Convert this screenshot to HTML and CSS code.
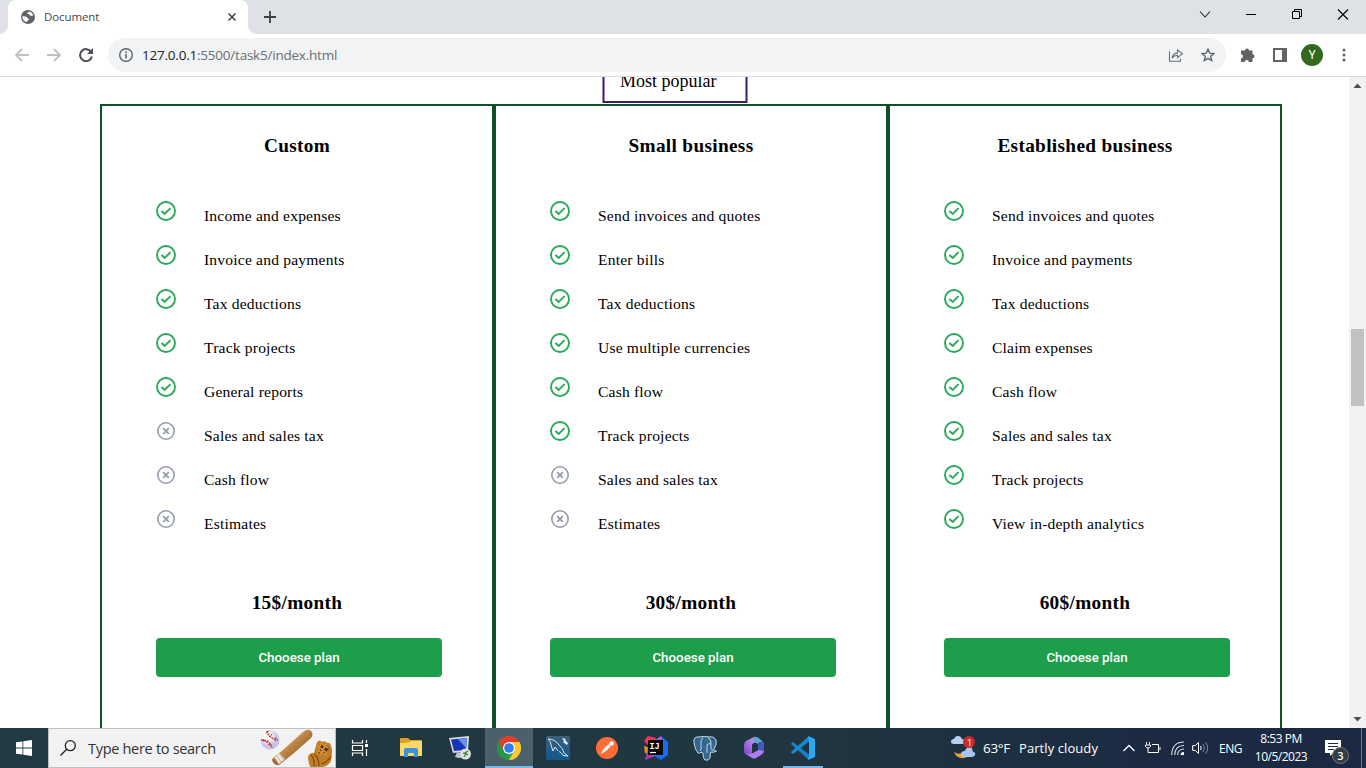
FILE: index.html
```html
<!DOCTYPE html>
<html lang="en">
<head>
<meta charset="utf-8">
<title>Document</title>
<link rel="stylesheet" href="styles.css">
</head>
<body>
<svg class="defs" width="0" height="0" aria-hidden="true">
  <symbol id="yes" viewBox="0 0 20 20"><circle cx="10" cy="10" r="9" fill="none" stroke="#28a85b" stroke-width="1.9"/><path d="M5.4 10 8.7 13 14.500 7.200" fill="none" stroke="#28a85b" stroke-width="1.900"/></symbol>
  <symbol id="no" viewBox="0 0 20 20"><circle cx="10" cy="10" r="8.200" fill="none" stroke="#949bad" stroke-width="1.600"/><path d="M7.2 7.2 12.8 12.8M12.8 7.2 7.2 12.8" fill="none" stroke="#949bad" stroke-width="1.800"/></symbol>
</svg>
<header class="tabstrip">
  <div class="tab">
    <svg class="globe" width="14" height="14" viewBox="0 0 14 14"><circle cx="7" cy="7" r="7" fill="#5f6368"/><path d="M1.500 6.300c1.500.2 3.200-.1 4.300.8.8.7.5 1.500 1.600 1.600.8.1.7 1.300-.1 1.400-.9.200-.5 1.200-1.200 1.900C3.500 12 1.100 9.600 1.500 6.300zM8 1.500c-.2 1-1.800.8-2 1.800-.1.800.9.700 1.700.8 1 .2.8 1.700 1.900 1.700 1 0 1.600-.8 2.800.1C12.200 3.700 10.300 1.700 8 1.500z" fill="#fff"/></svg>
    <span class="tab-title">Document</span>
    <svg width="8" height="8" viewBox="0 0 8 8"><path d="M.5.5l7 7M7.500.5l-7 7" stroke="#3c4043" stroke-width="1.500"/></svg>
  </div>
  <svg class="plus" width="12" height="12" viewBox="0 0 12 12"><path d="M6 0v12M0 6h12" stroke="#3c4043" stroke-width="1.800"/></svg>
  <div class="window-buttons">
    <svg width="46" height="28" viewBox="0 0 46 28"><path d="M18 11.500l5 5.500 5-5.500" fill="none" stroke="#222" stroke-width="1.100"/></svg>
    <svg width="46" height="28" viewBox="0 0 46 28"><path d="M18 14.500h10" stroke="#000"/></svg>
    <svg width="46" height="28" viewBox="0 0 46 28"><path d="M18.500 11.500h7v7h-7zM20.500 11v-1.500h7v7H26" fill="none" stroke="#000"/></svg>
    <svg width="46" height="28" viewBox="0 0 46 28"><path d="M18 9.500l10 10M28 9.500l-10 10" stroke="#000" stroke-width="1.100"/></svg>
  </div>
</header>
<nav class="toolbar">
  <svg width="14" height="14" viewBox="0 0 14 14"><path d="M14 7H1.500M7 1 1 7l6 6" fill="none" stroke="#bdc0c4" stroke-width="1.800"/></svg>
  <svg width="14" height="14" viewBox="0 0 14 14"><path d="M0 7h12.500M7 1l6 6-6 6" fill="none" stroke="#bdc0c4" stroke-width="1.800"/></svg>
  <svg width="14" height="14" viewBox="0 0 14 14"><path d="M12.200 4A6 6 0 1 0 12.900 8.500" fill="none" stroke="#4b4e52" stroke-width="2"/><path d="M14 0v6H8z" fill="#4b4e52"/></svg>
  <div class="omnibox">
    <svg width="14" height="14" viewBox="0 0 14 14"><circle cx="7" cy="7" r="6.300" fill="none" stroke="#5f6368" stroke-width="1.400"/><path d="M7 6v4.500M7 3.300v1.600" stroke="#5f6368" stroke-width="1.600"/></svg>
    <span class="url"><b>127.0.0.1</b>:5500/task5/index.html</span>
    <svg class="share" width="16" height="14" viewBox="0 0 16 14"><path d="M1.500 3.500v9.800h11v-2.500M4 10.200c.5-3.300 2.200-5 5.500-5.300V1.800l5 3.900-5 3.900V7.200c-2.200 0-4 1-5.500 3z" fill="none" stroke="#6b6f74" stroke-width="1.100"/></svg>
    <svg width="14" height="14" viewBox="0 0 14 14"><path d="M7 1.200l1.700 3.900 4.200.4-3.200 2.800 1 4.200L7 10.300l-3.700 2.200 1-4.200L1.100 5.500l4.200-.4z" fill="none" stroke="#5f6368" stroke-width="1.400"/></svg>
  </div>
  <svg class="puzzle" width="15" height="15" viewBox="0 0 15 15"><path d="M1.500 2.500H5a2 2 0 1 1 4 0h3.500v3.800a2 2 0 1 1 0 4v3.700H8.700a2 2 0 1 0-4 0H1V10.200a2 2 0 1 0 0-4V2.500z" fill="#5f6368"/></svg>
  <svg class="panel" width="14" height="14" viewBox="0 0 14 14"><path d="M1 1h12v12H1z" fill="none" stroke="#5f6368" stroke-width="2"/><path d="M9 1h4v12H9z" fill="#5f6368"/></svg>
  <span class="avatar">Y</span>
  <svg class="dots" width="4" height="14" viewBox="0 0 4 14"><g fill="#5f6368"><circle cx="2" cy="2" r="1.500"/><circle cx="2" cy="7" r="1.500"/><circle cx="2" cy="12" r="1.500"/></g></svg>
</nav>
<div class="viewport">
  <main class="page">
    <div class="ribbon"><div class="popular">Most popular</div></div>
    <div class="plans">
      <section class="plan">
        <h3>Custom</h3>
        <ul>
          <li><svg><use href="#yes"/></svg><span>Income and expenses</span></li>
          <li><svg><use href="#yes"/></svg><span>Invoice and payments</span></li>
          <li><svg><use href="#yes"/></svg><span>Tax deductions</span></li>
          <li><svg><use href="#yes"/></svg><span>Track projects</span></li>
          <li><svg><use href="#yes"/></svg><span>General reports</span></li>
          <li><svg><use href="#no"/></svg><span>Sales and sales tax</span></li>
          <li><svg><use href="#no"/></svg><span>Cash flow</span></li>
          <li><svg><use href="#no"/></svg><span>Estimates</span></li>
        </ul>
        <p class="price">15$/month</p>
        <button>Chooese plan</button>
      </section>
      <section class="plan">
        <h3>Small business</h3>
        <ul>
          <li><svg><use href="#yes"/></svg><span>Send invoices and quotes</span></li>
          <li><svg><use href="#yes"/></svg><span>Enter bills</span></li>
          <li><svg><use href="#yes"/></svg><span>Tax deductions</span></li>
          <li><svg><use href="#yes"/></svg><span>Use multiple currencies</span></li>
          <li><svg><use href="#yes"/></svg><span>Cash flow</span></li>
          <li><svg><use href="#yes"/></svg><span>Track projects</span></li>
          <li><svg><use href="#no"/></svg><span>Sales and sales tax</span></li>
          <li><svg><use href="#no"/></svg><span>Estimates</span></li>
        </ul>
        <p class="price">30$/month</p>
        <button>Chooese plan</button>
      </section>
      <section class="plan">
        <h3>Established business</h3>
        <ul>
          <li><svg><use href="#yes"/></svg><span>Send invoices and quotes</span></li>
          <li><svg><use href="#yes"/></svg><span>Invoice and payments</span></li>
          <li><svg><use href="#yes"/></svg><span>Tax deductions</span></li>
          <li><svg><use href="#yes"/></svg><span>Claim expenses</span></li>
          <li><svg><use href="#yes"/></svg><span>Cash flow</span></li>
          <li><svg><use href="#yes"/></svg><span>Sales and sales tax</span></li>
          <li><svg><use href="#yes"/></svg><span>Track projects</span></li>
          <li><svg><use href="#yes"/></svg><span>View in-depth analytics</span></li>
        </ul>
        <p class="price">60$/month</p>
        <button>Chooese plan</button>
      </section>
    </div>
  </main>
  <div class="scrollbar">
    <svg width="17" height="17" viewBox="0 0 17 17"><path d="M4.500 11 8.500 6.500l4 4.500z" fill="#505050"/></svg>
    <div class="thumb"></div>
    <svg width="17" height="17" viewBox="0 0 17 17"><path d="M4.500 6h8l-4 4.500z" fill="#505050"/></svg>
  </div>
</div>
<footer class="taskbar">
  <div class="start"><svg width="16" height="16" viewBox="0 0 16 16"><path d="M0 2.300 6.500 1.400v6.200H0zM7.300 1.300 16 0v7.600H7.300zM0 8.400h6.500v6.200L0 13.700zM7.300 8.400H16V16l-8.700-1.300z" fill="#fff"/></svg></div>
  <div class="search">
    <svg width="16" height="16" viewBox="0 0 16 16"><circle cx="10.300" cy="5.700" r="5" fill="none" stroke="#222" stroke-width="1.300"/><path d="M6.700 9.300.5 15.500" stroke="#222" stroke-width="1.400"/></svg>
    <span class="search-text">Type here to search</span>
    <svg class="baseball" width="73" height="38" viewBox="0 0 73 38">
      <defs><linearGradient id="bat" x1="0" y1="0" x2="1" y2="1"><stop offset=".3" stop-color="#dba35c"/><stop offset=".7" stop-color="#96602d"/></linearGradient><radialGradient id="ball" cx=".35" cy=".3"><stop offset=".4" stop-color="#fafafa"/><stop offset="1" stop-color="#c9c3e8"/></radialGradient></defs>
      <circle cx="10" cy="11" r="9.500" fill="url(#ball)"/>
      <path d="M7 2q1 7 11 9M1 11q9 0 11 8" fill="none" stroke="#c33b3b" stroke-width="1.500" stroke-dasharray="2 .8"/><path d="M9 1.500l-3 3M12 5l-2 3M16 8l-1 4M3 10l1 3M8 11l-2 3M11 15l-3 1" stroke="#c33b3b"/>
      <path d="M12 30Q18 25 24 20L43 3q5-4 8-1 3 3 0 7L34 24 19 36q-5 0-7-6z" fill="url(#bat)"/><path d="M15 28l4-4 6 6-6 5q-4-1-4-7z" fill="#eee7dc"/><path d="M16 26l5 7M19 24l5 7" stroke="#b7aaa0"/><path d="M12 31q3-4 7 5-5 1-7-5z" fill="#a96931"/>
      <path d="M48 28q2-5 6-4l3-11q3-3 5 0 3-2 5 1 3-1 4 3 2 2 0 15-3 6-10 6H51q-2 0-3-10z" fill="#c27e24"/><path d="M57 22l3-7 6 1 3 3-3 5-6 1z" fill="#543015"/><path d="M57 17l10 7M57 21l9 5M62 15l6 4M66 15l-6 11M61 14l-3 9" stroke="#d8943b" stroke-width="1.600"/><path d="M54 25q5 3 5 12M51 26q4 4 3 11M71 27q-3 6-10 8" fill="none" stroke="#814711" stroke-width="1.200"/>
    </svg>
  </div>
  <div class="slot taskview"><svg width="18" height="16" viewBox="0 0 18 16"><path d="M1.500 0v3h10V0M1.500 16v-3h10v3M1.500 5.500h10v5h-10zM15.500 0v3M15.500 9v7" fill="none" stroke="#fff" stroke-width="1.200"/><path d="M14 4h3v3h-3z" fill="#fff"/></svg></div>
  <div class="apps">
    <div class="slot"><svg width="22" height="20" viewBox="0 0 22 20"><path d="M0 1q0-1 1-1h7l2 2h11q1 0 1 1v15H0z" fill="#dfa023"/><path d="M0 5q9 0 11-2h11v15H0z" fill="#ffd766"/><path d="M4 19v-7q0-2 2-2h10q2 0 2 2v7h-4v-4H8v4z" fill="#3994dd"/></svg></div>
    <div class="slot"><svg width="24" height="26" viewBox="0 0 24 26"><path d="M1 3l20-2-1 15-15 2z" fill="#d9dfe5"/><path d="M3 4.500l16-1.500-1 12-12 1z" fill="#1735b7"/><path d="M10 4l9-1-1 10z" fill="#6b91ed"/><path d="M9 17l6 1 1 4q-4 2-9 0z" fill="#b9c2c9"/><circle cx="17.500" cy="19" r="5.500" fill="#dde1de"/><path d="M15 18l3 1-2 3M20 16l-3 2 3 2" fill="none" stroke="#37833b" stroke-width="1.300"/></svg></div>
    <div class="slot active"><svg width="24" height="24" viewBox="0 0 24 24"><circle cx="12" cy="12" r="12" fill="#34a853"/><path d="M1.600 6A12 12 0 0 1 22.400 6H12l-5.200 9z" fill="#e33b2e"/><path d="M22.400 6A12 12 0 0 1 12 24l5.200-9L12 6z" fill="#fcc934"/><path d="M1.600 6 6.800 15 12 18l-1 6A12 12 0 0 1 1.600 6z" fill="#26954a"/><circle cx="12" cy="12" r="6" fill="#fff"/><circle cx="12" cy="12" r="4.800" fill="#2f7de9"/></svg></div>
    <div class="slot"><svg width="24" height="24" viewBox="0 0 24 24"><defs><linearGradient id="sq" x2="0" y2="1"><stop stop-color="#3b607e"/><stop offset="1" stop-color="#11578d"/></linearGradient></defs><rect width="24" height="24" rx="2" fill="url(#sq)"/><path d="M2 3q7 0 11 6 4 3 5 8l4 3-5-.5q-2-4-4-4M2 3q3 2 3 6l2 6 2-4 3 4" fill="none" stroke="#d7e6ee"/><path d="M16 2l2 3-1 1 4 3 1-2-3-3 1-1z" fill="#e9eef1"/></svg></div>
    <div class="slot"><svg width="22" height="22" viewBox="0 0 22 22"><circle cx="11" cy="11" r="11" fill="#ff6c37"/><path d="M5 17q2-6 8-10l2 2q-4 5-10 8z" fill="#fff"/><circle cx="15.500" cy="6.500" r="2.300" fill="#fff"/><path d="M12.500 7.500l2 2" stroke="#ff6c37" stroke-width=".8"/></svg></div>
    <div class="slot"><svg class="idea" width="24" height="24" viewBox="0 0 24 24"><path d="M0 5 4 0l8 2-3 12z" fill="#ff315e"/><path d="M0 10l6 2-2 6-3-1z" fill="#f58a22"/><path d="M4 12 1 24l13-5z" fill="#a73dac"/><path d="M12 3l5-3 7 6v13l-7 5-7-4z" fill="#176bf4"/><path d="M12 4l5-4 2 7z" fill="#bf55b2"/><path d="M4 4h15v15H4z" fill="#08080b"/><path d="M6 16.500h6" stroke="#fff" stroke-width="1.200"/><text x="5.500" y="12.500" class="ij">IJ</text></svg></div>
    <div class="slot"><svg width="24" height="25" viewBox="0 0 24 25"><path d="M6 1Q0 0 1 7q1 7 4 10 2 1 3-1 1 1 2 1 0 6 2 7 4 1 5-2l.5-6q3 1 6-1-2 0-3-1 4-6 2.500-10Q21 0 16 1 11-.5 6 1z" fill="#336791" stroke="#c6d5df"/><path d="M10 1.500Q7 4 8 10q1 3-1 5M15 1.500q4 3 3 8-1 4 2 5M14 17V9q1-2 4-1" fill="none" stroke="#c6d5df"/></svg></div>
    <div class="slot"><svg width="22" height="24" viewBox="0 0 22 24"><defs><linearGradient id="m3" x1="1" x2="0" y2="1"><stop stop-color="#d6a7ff"/><stop offset="1" stop-color="#743fc7"/></linearGradient></defs><path d="M11 1 3 5Q1 6.500 1 9v6q0 3 3 4l3 1q2-1 2-4V9q0-1 2-2l4-3z" fill="url(#m3)"/><path d="M11 1q3-1 7 3 3 2 3 6v5l-6-4V9l-4-3q-2-2 0-5z" fill="#65a4cf"/><path d="M3 18q4 1 6-1l6-3 6-1v2q0 2-3 4l-5 3q-2 1-4 0z" fill="#ad7cf0"/><path d="M15 9v5l6 1v-5q0-3-2-4-4-1-4 3z" fill="#4259b8"/><path d="M9 9l2-2h3l1 2v5l-5 3H9z" fill="#21353f"/></svg></div>
    <div class="slot running"><svg width="24" height="24" viewBox="0 0 24 24"><path d="M0 7.500 2 6l16 12.500V24L.5 8.500z" fill="#1680c5"/><path d="M0 16.500 2 18 18 5.500V0L.5 15.500z" fill="#168bd2"/><path d="M17 0l7 3v18l-7 3 1-5V5z" fill="#2aa8f2"/></svg></div>
  </div>
  <div class="tray">
    <svg class="weather" width="26" height="24" viewBox="0 0 26 24"><path d="M16 6q2 8-5 11-4 2-8-1 3 7 10 6 9-2 8-11z" fill="#f2a72b"/><path d="M3 8q-3 0-3-2.500T3 3q1-3 4-3t4 3q3 0 3 2.500T12 8z" fill="#b8cff3"/><path d="M14 21q-4 0-4-3t4-3q1-4 5-3 3 1 3 4 3 0 2 3-1 2-3 2z" fill="#a8c5f3"/><circle cx="18" cy="6" r="6" fill="#cc2929"/><text x="16" y="9.500" class="alert">1</text></svg>
    <span class="temp">63°F</span><span class="cloudy">Partly cloudy</span>
    <svg class="up" width="12" height="8" viewBox="0 0 12 8"><path d="M.5 7 6 1.500 11.500 7" fill="none" stroke="#fff" stroke-width="1.300"/></svg>
    <svg class="battery" width="16" height="12" viewBox="0 0 16 12"><path d="M1.500 0v2.500M4.500 0v2.500M.5 3h5v1.500q-1 1.500-2.500 1.500T.5 4.500zM3 6v4.500h10.500v-8H7M15 5v3" fill="none" stroke="#fff"/></svg>
    <svg class="wifi" width="14" height="14" viewBox="0 0 14 14"><path d="M.7 14Q1 1 13 1M3.700 14Q4 4.500 13 4.500M6.500 14Q7 8 13 8" fill="none" stroke="#d8dde4" stroke-width="1.100"/><path d="M9.500 14Q9.500 11 13 11v3z" fill="#fff"/></svg>
    <svg class="volume" width="17" height="14" viewBox="0 0 17 14"><path d="M.6 4.700h2.500L6.500 1.500v11L3.100 9.300H.6zM8.500 5q1.500 2 0 4" fill="none" stroke="#fff"/><path d="M11 3q3 4 0 8M13.500 1q4.500 6 0 12" fill="none" stroke="#78859a"/></svg>
    <span class="lang">ENG</span>
    <div class="clock"><span>8:53 PM</span><span class="date">10/5/2023</span></div>
    <div class="notify"><svg width="17" height="17" viewBox="0 0 17 17"><path d="M0 0h16v13h-8l-3 3v-3H0z" fill="#fff"/><path d="M3 3.500h10M3 6.500h10M3 9.500h6" stroke="#1b2a40"/></svg><span class="count">3</span></div>
    <div class="peek"></div>
  </div>
</footer>
</body>
</html>
```
FILE: styles.css
```css
* { box-sizing: border-box; }
body { margin: 0; width: 1366px; height: 768px; overflow: hidden; display: flex; flex-direction: column; background: #fff; font-family: "Open Sans", sans-serif; }
svg { display: block; flex: none; }
.defs { position: absolute; }
span { white-space: nowrap; }

.tabstrip { height: 34px; flex: none; display: flex; background: #dee1e6; padding-left: 8px; }
.tab { position: relative; width: 240px; height: 34px; background: #fff; border-radius: 8px 8px 0 0; display: flex; align-items: center; padding: 0 12px 0 13px; }
.tab::before, .tab::after { content: ""; position: absolute; bottom: 0; width: 8px; height: 8px; }
.tab::before { left: -8px; background: radial-gradient(circle at 0 0, #dee1e6 7.5px, #fff 8px); }
.tab::after { right: -8px; background: radial-gradient(circle at 100% 0, #dee1e6 7.5px, #fff 8px); }
.tab-title { flex: 1; margin-left: 9px; padding-bottom: 2px; font-size: 11.5px; letter-spacing: -.1px; color: #45484c; }
.plus { margin: 11px 0 0 16px; }
.window-buttons { margin-left: auto; display: flex; }

.toolbar { height: 43px; flex: none; display: flex; align-items: center; padding: 0 20px 0 15px; border-bottom: 1px solid #d9dbdf; gap: 18px; }
.omnibox { width: 1118px; height: 34px; margin-left: -3px; border-radius: 17px; background: #f1f3f4; display: flex; align-items: center; padding: 0 11px; }
.url { margin-left: 9px; font-size: 13.5px; color: #6b6f73; letter-spacing: -.22px; }
.url b { font-weight: 400; color: #202124; }
.share { margin: 0 17px 0 auto; }
.puzzle { margin-left: -4px; }
.avatar { width: 22px; height: 22px; margin-left: -4px; flex: none; border-radius: 50%; background: #33691e; color: #fff; font: 12px/22px Roboto, sans-serif; text-align: center; }
.dots { margin-left: 1px; }

.viewport { height: 651px; flex: none; display: flex; overflow: hidden; }
.page { width: 1349px; height: 651px; overflow: hidden; font-family: "Liberation Serif", serif; color: #000; }
.ribbon { height: 27px; display: flex; align-items: flex-end; padding: 0 0 1px 602px; overflow: hidden; }
.popular { width: 145px; height: 48px; flex: none; border: 2px solid #3f1d66; padding: 14px 0 0 15.5px; font-size: 18px; line-height: 21px; transform: translateX(.5px); }
.plans { display: flex; padding-left: 100px; }
.plan { width: 394px; height: 700px; flex: none; border: 2px solid #0f5127; padding: 28px 50px 0 54px; }
.plan h3, .price { margin: 0 0 0 -4px; font-size: 19.3px; letter-spacing: .32px; font-weight: 700; line-height: 24px; text-align: center; }
.plan ul { list-style: none; margin: 43px 0 0; padding: 0; }
.plan li { height: 44px; display: flex; gap: 28px; font-size: 15.6px; letter-spacing: .18px; line-height: 18px; }
.plan li svg { width: 20px; height: 20px; }
.plan li span { margin-top: 6px; }
.plan .price { margin-top: 38px; }
.plan button { display: block; width: 286px; height: 39px; margin-top: 23px; padding: 0; border: 0; border-radius: 4px; background: #1d9e4b; color: #fff; font: 500 13.333px Roboto, sans-serif; }
.scrollbar { width: 17px; background: #f1f1f1; display: flex; flex-direction: column; }
.thumb { width: 13px; height: 77px; margin: 235px 2px auto; background: #c1c1c1; }

.taskbar { height: 40px; flex: none; display: flex; background: linear-gradient(90deg, #223b43, #20353f 60%, #1b2a42 85%); color: #fff; }
.start { width: 48px; display: flex; align-items: center; justify-content: center; }
.search { width: 288px; height: 40px; background: #f2f2f2; border: 1px solid #bdbfc0; display: flex; align-items: center; padding-left: 11px; }
.search-text { margin-left: 12px; color: #333; font-size: 14.5px; letter-spacing: -.3px; }
.baseball { margin-left: auto; margin-right: 2px; }
.slot { width: 48px; height: 40px; display: flex; align-items: center; justify-content: center; }
.apps { display: flex; gap: 1px; margin-left: 3px; }
.active { background: #4c6069; box-shadow: inset 0 -2px #76b9ed; }
.running { background: linear-gradient(#76b9ed, #76b9ed) 50% 100% / 40px 2px no-repeat; }
.ij { font: 700 8.5px "Liberation Mono", monospace; fill: #fff; }
.tray { margin-left: auto; display: flex; align-items: center; font-size: 13px; }
.weather { margin-right: 6px; }
.alert { font: 9px Roboto, sans-serif; fill: #fff; }
.temp { width: 36px; font-size: 13.5px; letter-spacing: -.3px; }
.cloudy { width: 79px; letter-spacing: .08px; }
.up { margin-left: 25px; }
.battery { margin-left: 10px; }
.wifi { margin-left: 10px; }
.volume { margin-left: 7px; }
.lang { width: 24px; margin-left: 10px; font-size: 12px; letter-spacing: -.5px; }
.clock { width: 54px; margin-left: 11px; display: flex; flex-direction: column; align-items: center; font-size: 12px; line-height: 18px; letter-spacing: -.5px; }
.notify { position: relative; width: 24px; height: 17px; margin-left: 17px; }
.count { position: absolute; left: 7px; top: 7px; width: 17px; height: 17px; border-radius: 50%; border: 1px solid #777; background: #343b45; font-size: 11px; line-height: 15px; text-align: center; font-weight: 600; }
.peek { width: 1px; height: 40px; margin: 0 4px 0 12px; background: #6c7788; }
```
